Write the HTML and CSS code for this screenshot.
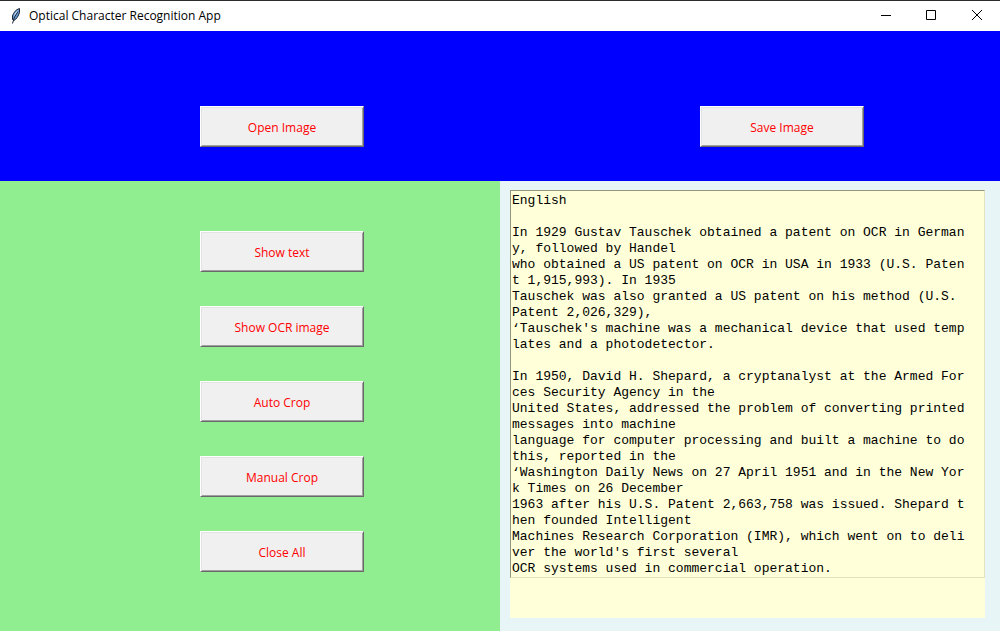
FILE: index.html
```html
<!DOCTYPE html>
<html lang="en">
<head>
<meta charset="utf-8">
<title>Optical Character Recognition App</title>
<link rel="stylesheet" href="styles.css">
</head>
<body>
<header class="titlebar">
  <svg class="app-icon" viewBox="0 0 16 16" aria-hidden="true">
    <path d="M11.500 0.500C8 1.500 5.500 4.500 4.500 8L4.500 11.500L6 12.500C8.500 11 10.500 8 11.500 4.500Z" fill="#6298d6" stroke="#1c2430"/>
    <path d="M10.500 1.500L7 5L5.500 10L8.500 6Z" fill="#c4dcf5"/>
    <path d="M10 3.500L6.500 9L4.500 15.500" fill="none" stroke="#1c2430"/>
  </svg>
  <h1 class="title">Optical Character Recognition App</h1>
  <div class="window-controls">
    <button class="window-button" type="button" aria-label="Minimize"><svg viewBox="0 0 12 12"><path d="M2 5.500H12"/></svg></button>
    <button class="window-button" type="button" aria-label="Maximize"><svg viewBox="0 0 12 12"><path d="M1.500 0.500H10.500V9.500H1.500Z"/></svg></button>
    <button class="window-button" type="button" aria-label="Close"><svg viewBox="0 0 12 12"><path d="M1 0L11 10M11 0L1 10"/></svg></button>
  </div>
</header>
<main class="app">
  <section class="toolbar">
    <div class="slot"><button class="btn" type="button">Open Image</button></div>
    <div class="slot"><button class="btn" type="button">Save Image</button></div>
  </section>
  <section class="workspace">
    <div class="actions">
      <button class="btn" type="button">Show text</button>
      <button class="btn" type="button">Show OCR image</button>
      <button class="btn" type="button">Auto Crop</button>
      <button class="btn" type="button">Manual Crop</button>
      <button class="btn" type="button">Close All</button>
    </div>
    <div class="result">
      <div class="paper">
        <textarea class="output" rows="24" spellcheck="false" aria-label="Recognized text">English

In 1929 Gustav Tauschek obtained a patent on OCR in Germany, followed by Handel
who obtained a US patent on OCR in USA in 1933 (U.S. Patent 1,915,993). In 1935
Tauschek was also granted a US patent on his method (U.S. Patent 2,026,329),
‘Tauschek's machine was a mechanical device that used templates and a photodetector.

In 1950, David H. Shepard, a cryptanalyst at the Armed Forces Security Agency in the
United States, addressed the problem of converting printed messages into machine
language for computer processing and built a machine to do this, reported in the
‘Washington Daily News on 27 April 1951 and in the New York Times on 26 December
1963 after his U.S. Patent 2,663,758 was issued. Shepard then founded Intelligent
Machines Research Corporation (IMR), which went on to deliver the world's first several
OCR systems used in commercial operation.</textarea>
      </div>
    </div>
  </section>
</main>
</body>
</html>
```
FILE: styles.css
```css
* {
  box-sizing: border-box;
}

body {
  margin: 0;
  min-height: 100vh;
  display: flex;
  flex-direction: column;
  font: 12px/16px "Segoe UI", "Open Sans", "Noto Sans", sans-serif;
}

.titlebar {
  display: flex;
  align-items: center;
  height: 31px;
  padding-left: 8px;
  border-top: 1px solid #2b2b2b;
  background: #fff;
}

.app-icon {
  width: 16px;
  height: 16px;
}

.title {
  flex: 1;
  margin: 0 0 0 5px;
  font-size: 12px;
  font-weight: 400;
  color: #000;
}

.window-controls {
  display: flex;
}

.window-button {
  display: flex;
  align-items: center;
  justify-content: center;
  width: 46px;
  height: 30px;
  padding: 0;
  border: 0;
  background: none;
}

.window-button svg {
  width: 12px;
  height: 12px;
  fill: none;
  stroke: #000;
}

.app {
  flex: 1;
  display: flex;
  flex-direction: column;
}

.toolbar {
  display: grid;
  grid-template-columns: 1fr 1fr;
  padding: 75px 0 34px;
  background: #00f;
}

.slot {
  padding-left: 40%;
}

.btn {
  display: block;
  width: 164px;
  height: 41px;
  padding: 2px 0 0;
  border: 1px solid;
  border-color: #fff #696969 #696969 #fff;
  box-shadow: inset 1px 1px #e3e3e3, inset -1px -1px #a0a0a0;
  background: #f0f0f0;
  color: #f00;
  font: inherit;
}

.workspace {
  flex: 1;
  display: grid;
  grid-template-columns: 1fr 1fr;
}

.actions {
  display: flex;
  flex-direction: column;
  gap: 34px;
  padding: 50px 0 50px 40%;
  background: #90ee90;
}

.result {
  padding: 9px 15px 13px 10px;
  background: #e8f5f6;
}

.paper {
  height: 100%;
  background: #ffffd9;
}

.output {
  display: block;
  width: 100%;
  margin: 0;
  padding: 2px 16px 0 1px;
  border: 1px solid;
  border-color: #96967f #e3e3c0 #e3e3c0 #96967f;
  outline: 0;
  resize: none;
  overflow: hidden;
  background: transparent;
  color: #000;
  font: 13px/16px "Courier New", "Liberation Mono", monospace;
  word-break: break-all;
  line-break: anywhere;
}
```
